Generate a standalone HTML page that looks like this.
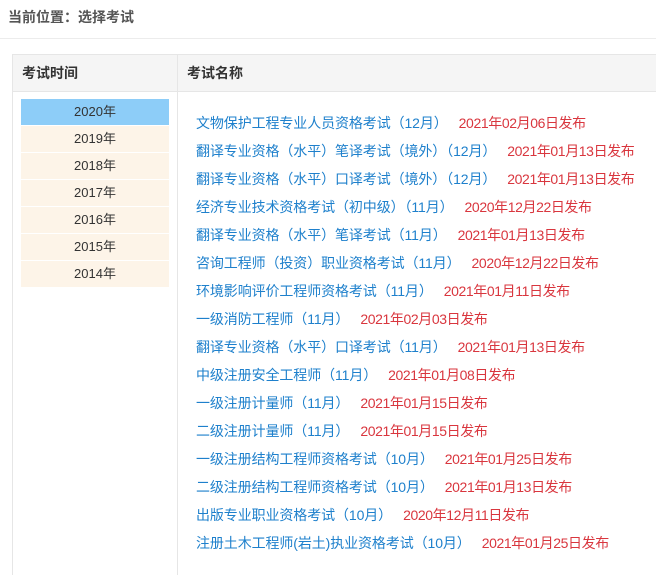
<!DOCTYPE html>
<html><head><meta charset="utf-8"><style>
body{margin:0;width:656px;height:553px;overflow:hidden;background:#fff;font-family:"Liberation Sans","Noto Sans CJK SC",sans-serif;font-size:14px}
.crumb{position:absolute;left:8px;top:7px;color:#555;font-size:14px;line-height:20px;font-weight:bold}
.hr{position:absolute;left:0;top:38px;width:656px;height:1px;background:#ececec}
.tbl{position:absolute;left:12px;top:54px;width:660px;height:520px;border-left:1px solid #e6e6e6;border-top:1px solid #e6e6e6}
.hd{position:absolute;left:0;top:0;width:660px;height:36px;background:#f5f5f5;border-bottom:1px solid #e6e6e6}
.hd span{position:absolute;top:9px;font-weight:bold;color:#333;line-height:18px}
.vd{position:absolute;left:164px;top:0;width:1px;height:520px;background:#e6e6e6}
.yr{position:absolute;left:8px;width:148px;height:26px;line-height:26px;text-align:center;color:#333;background:#fdf4e8;border-bottom:1px solid #fff;font-size:13px}
.yr.on{background:#8dcdf8}
.it{position:absolute;left:196px;line-height:20px;white-space:nowrap}
.it a{color:#1e80cc;text-decoration:none;letter-spacing:-0.1px}
.it b{font-weight:normal;color:#d9363e;margin-left:11px;letter-spacing:-0.4px}
</style></head><body>
<div class="crumb">当前位置：选择考试</div>
<div class="hr"></div>
<div class="tbl">
<div class="hd"><span style="left:9px">考试时间</span><span style="left:174px">考试名称</span></div>
<div class="vd"></div>
<div class="yr on" style="top:44px">2020年</div>
<div class="yr" style="top:71px">2019年</div>
<div class="yr" style="top:98px">2018年</div>
<div class="yr" style="top:125px">2017年</div>
<div class="yr" style="top:152px">2016年</div>
<div class="yr" style="top:179px">2015年</div>
<div class="yr" style="top:206px">2014年</div>
</div>
<div class="it" style="top:113px"><a>文物保护工程专业人员资格考试（12月）</a><b>2021年02月06日发布</b></div>
<div class="it" style="top:141px"><a>翻译专业资格（水平）笔译考试（境外）（12月）</a><b>2021年01月13日发布</b></div>
<div class="it" style="top:169px"><a>翻译专业资格（水平）口译考试（境外）（12月）</a><b>2021年01月13日发布</b></div>
<div class="it" style="top:197px"><a>经济专业技术资格考试（初中级）（11月）</a><b>2020年12月22日发布</b></div>
<div class="it" style="top:225px"><a>翻译专业资格（水平）笔译考试（11月）</a><b>2021年01月13日发布</b></div>
<div class="it" style="top:253px"><a>咨询工程师（投资）职业资格考试（11月）</a><b>2020年12月22日发布</b></div>
<div class="it" style="top:281px"><a>环境影响评价工程师资格考试（11月）</a><b>2021年01月11日发布</b></div>
<div class="it" style="top:309px"><a>一级消防工程师（11月）</a><b>2021年02月03日发布</b></div>
<div class="it" style="top:337px"><a>翻译专业资格（水平）口译考试（11月）</a><b>2021年01月13日发布</b></div>
<div class="it" style="top:365px"><a>中级注册安全工程师（11月）</a><b>2021年01月08日发布</b></div>
<div class="it" style="top:393px"><a>一级注册计量师（11月）</a><b>2021年01月15日发布</b></div>
<div class="it" style="top:421px"><a>二级注册计量师（11月）</a><b>2021年01月15日发布</b></div>
<div class="it" style="top:449px"><a>一级注册结构工程师资格考试（10月）</a><b>2021年01月25日发布</b></div>
<div class="it" style="top:477px"><a>二级注册结构工程师资格考试（10月）</a><b>2021年01月13日发布</b></div>
<div class="it" style="top:505px"><a>出版专业职业资格考试（10月）</a><b>2020年12月11日发布</b></div>
<div class="it" style="top:533px"><a>注册土木工程师(岩土)执业资格考试（10月）</a><b>2021年01月25日发布</b></div>
</body></html>
